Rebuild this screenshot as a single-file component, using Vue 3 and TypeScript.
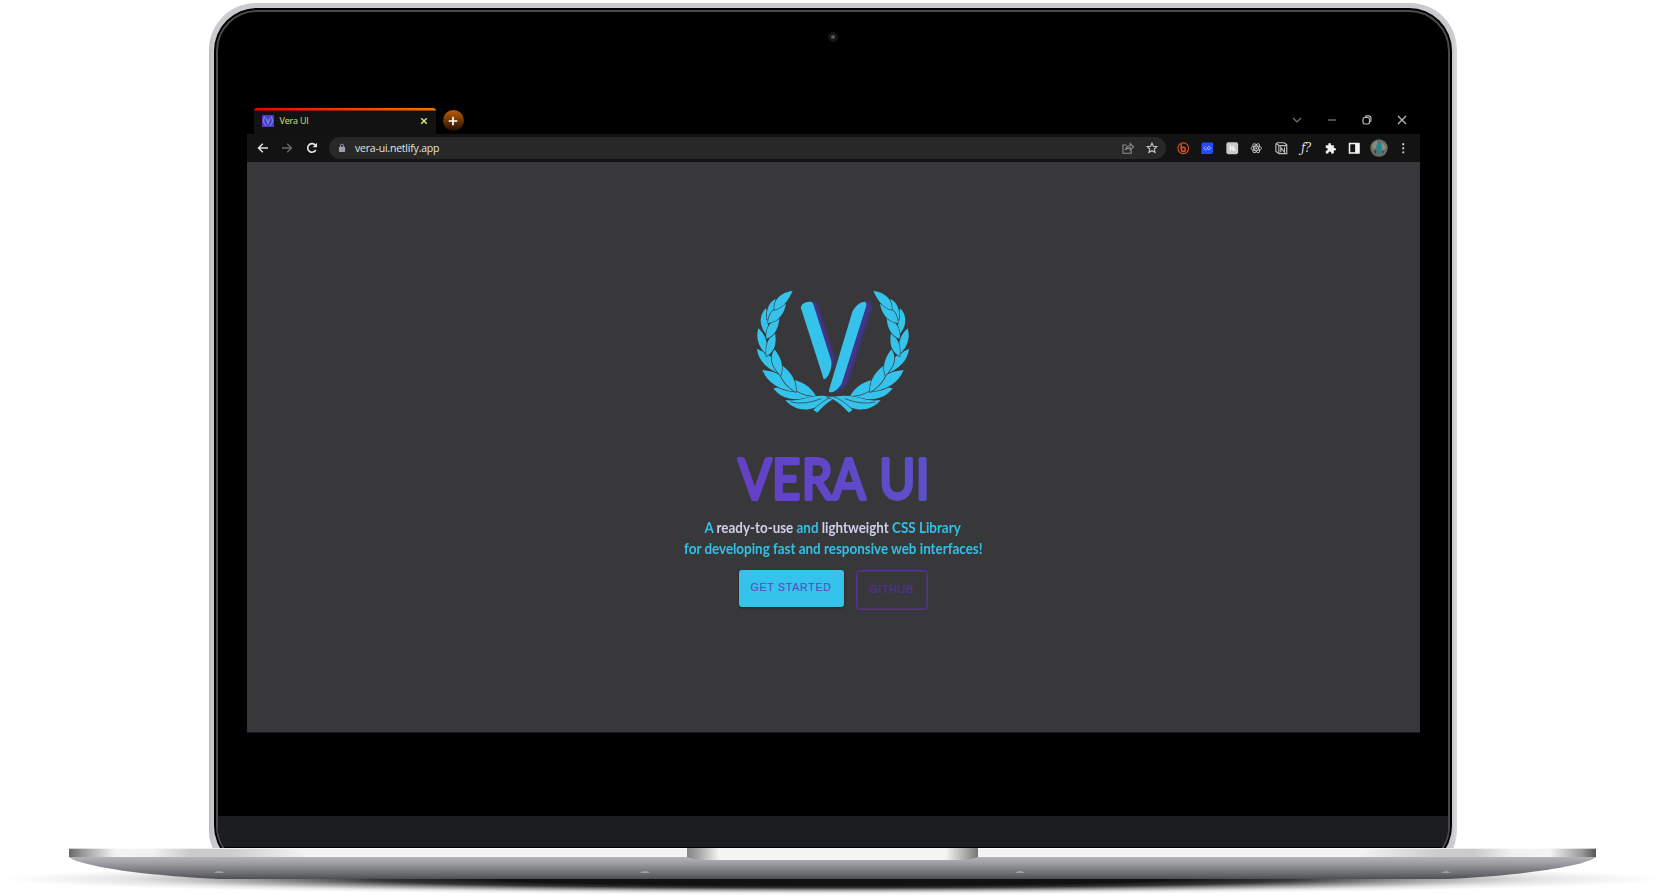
<script setup lang="ts">
const leaves: string[] = [
  'M64 310 C88 344 130 350 182 334 C146 308 108 300 64 310Z',
  'M116 283 C113 309 141 331 192 334 C175 303 148 288 116 283Z',
  'M31 255 C46 293 82 315 128 320 C108 278 74 258 31 255Z',
  'M83 237 C77 268 94 298 132 322 C134 282 112 254 83 237Z',
  'M15 191 C18 224 43 251 82 266 C78 226 52 208 15 191Z',
  'M67 193 C52 216 58 244 86 272 C97 241 84 213 67 193Z',
  'M19 130 C11 158 18 185 43 208 C50 172 40 149 19 130Z',
  'M69 145 C46 159 40 184 43 214 C71 199 74 170 69 145Z',
  'M41 70 C22 91 20 118 41 146 C52 124 52 92 41 70Z',
  'M82 97 C56 106 39 130 43 161 C70 154 81 125 82 97Z',
  'M71 42 C52 50 41 73 45 105 C60 90 72 66 71 42Z',
  'M102 57 C72 62 48 82 48 115 C82 109 97 84 102 57Z',
  'M122 17 C86 22 63 44 67 75 C95 68 111 42 122 17Z',
]
const feet: number[] = [219, 645, 1020, 1446]
</script>

<template>
  <main class="scene">
    <div class="lid-clip">
      <div class="lid">
        <div class="bezel">
          <div class="display">
            <div class="camera"><i></i></div>
            <section class="browser">
              <header class="tabs">
                <div class="tab">
                  <svg class="favicon" viewBox="0 0 12 12"><rect width="12" height="12" fill="#6130c4" /><path d="M3 1.500C.8 4 .8 8.500 4.200 10.700M9 1.500c2.200 2.500 2.200 7-1.200 9.200M4.200 3 6 8.500 8 3" fill="none" stroke="#4f8de8" stroke-width="1.400" /></svg>
                  <span class="tab-title">Vera UI</span>
                  <svg class="close" viewBox="0 0 8 8"><path d="m1.200 1.200 5.600 5.600m0-5.600L1.200 6.800" stroke="#dbe373" stroke-width="1.500" /></svg>
                </div>
                <div class="plus"><svg viewBox="0 0 10 10"><path d="M5 .7v8.600M.7 5h8.600" stroke="#fff" stroke-width="1.700" /></svg></div>
                <div class="controls">
                  <svg viewBox="0 0 12 12"><path d="m2 4 4 4 4-4" stroke="#777" stroke-width="1.200" /></svg>
                  <svg viewBox="0 0 12 12"><path d="M2 6h8" stroke="#999" stroke-width="1.200" /></svg>
                  <svg viewBox="0 0 12 12"><rect x="2" y="3.500" width="6.500" height="6.500" rx="1.700" stroke="#bbb" stroke-width="1.200" /><path d="M4 2.500c.4-.4 1-.6 2-.6h1.500c1.600 0 2.500.9 2.500 2.500v1.500c0 1-.2 1.600-.8 2" stroke="#bbb" stroke-width="1.100" /></svg>
                  <svg viewBox="0 0 12 12"><path d="m2 2 8 8m0-8-8 8" stroke="#bbb" stroke-width="1.200" /></svg>
                </div>
              </header>
              <nav class="toolbar">
                <div class="navs">
                  <svg viewBox="0 0 12 12"><path d="M11 6H1.500m4.300-4.300L1.500 6l4.300 4.300" stroke="#e4e4e4" stroke-width="1.500" /></svg>
                  <svg viewBox="0 0 12 12"><path d="M1 6h9.500M6.200 1.700 10.500 6l-4.300 4.300" stroke="#686868" stroke-width="1.400" /></svg>
                  <svg viewBox="0 0 12 12"><path d="M9.800 8A4.300 4.300 0 1 1 9 2.800L10.500 4.200" stroke="#e4e4e4" stroke-width="1.600" /><path d="M11 .8v4.400H6.600z" fill="#e4e4e4" /></svg>
                </div>
                <div class="address">
                  <svg class="lock" viewBox="0 0 8 10"><rect x=".9" y="3.700" width="6.200" height="5.200" rx=".7" fill="#9aa0a6" /><path d="M2.500 4V2.700a1.500 1.500 0 0 1 3 0V4" fill="none" stroke="#9aa0a6" /></svg>
                  <span class="url">vera-ui.netlify.app</span>
                  <svg class="share" viewBox="0 0 12 12"><path d="M4.500 3H1v8.300h8.300V8.500M3.500 8c.3-3 2-4.200 4.700-4.200V1.500l3.300 3.300-3.300 3.300V5.900C6 5.900 4.500 6.500 3.500 8Z" stroke="#8e8e8e" stroke-width="1.100" /></svg>
                  <svg viewBox="0 0 12 12"><path d="m6 1.200 1.400 3.100 3.400.4-2.500 2.300.7 3.400-3-1.700-3 1.700.7-3.400-2.500-2.300 3.400-.4z" stroke="#c8c8c8" stroke-width="1.100" /></svg>
                </div>
                <div class="extensions">
                  <svg viewBox="0 0 14 14"><circle cx="7" cy="7" r="6" stroke="#dd5420" stroke-width="1.200" /><path d="M4.800 2.500v5.500c0 1.500 1 2.500 2.200 2.500s2.400-1 2.400-2.200S8.400 6 7.200 6 5 7 5 8" stroke="#dd5420" stroke-width="1.700" /></svg>
                  <svg viewBox="0 0 14 14"><path d="M3 .5h10.500V10c0 2.500-1 3.500-3.500 3.500H.5V3C.5 1.500 1.500.5 3 .5Z" fill="#254aff" /><path d="M5 5 3 7l2 2c2 0 2-4 4-4l2 2-2 2-2-2" stroke="#b9c6ff" /></svg>
                  <svg viewBox="0 0 14 14"><rect x=".4" y=".4" width="13.200" height="13.200" rx="2" fill="#c9c9c9" /><path d="M5 3v7M8 4v6M4 7h5l1 3" stroke="#f4f4f4" stroke-width="1.500" /></svg>
                  <svg viewBox="0 0 14 14"><g stroke="#c8c8c8" stroke-width="1"><ellipse cx="7" cy="7" rx="5.800" ry="2.400" /><ellipse cx="7" cy="7" rx="5.800" ry="2.400" transform="rotate(60 7 7)" /><ellipse cx="7" cy="7" rx="5.800" ry="2.400" transform="rotate(120 7 7)" /></g><circle cx="7" cy="7" r="1.200" fill="#c8c8c8" /></svg>
                  <svg viewBox="0 0 14 14"><path d="M2.500.8h7.700l3 2.300v10H4.500L1 10.500V2.200zM1.500 1.500 4.300 4v9M4 4h9M6.500 11.500V6l4.200 5.500V6" stroke="#bbb" stroke-width="1.300" /></svg>
                  <span class="fx">ƒ?</span>
                  <svg viewBox="0 0 14 14"><path d="M2 3.500h3C4.500 1.800 5.200 1 6.300 1s1.800.8 1.300 2.500H11v3.200c1.600-.3 2.400.4 2.400 1.500S12.600 9.800 11 9.500V13H8c.3-1.600-.4-2.400-1.500-2.400S4.700 11.400 5 13H2V9.700c1.400.2 2.100-.5 2.100-1.500S3.400 6.600 2 6.800z" fill="#f0f0f0" /></svg>
                  <svg viewBox="0 0 14 14"><rect x="1.700" y="1.700" width="10.600" height="10.600" stroke="#f4f4f4" stroke-width="1.700" /><path d="M8 1.700h4.500v10.600H8z" fill="#f4f4f4" /></svg>
                  <svg class="avatar" viewBox="0 0 18 18"><circle cx="9" cy="9" r="8.700" fill="#6f6b66" /><path d="M2 7c2-4 4-5 5-5l1 4-4 5zM12 3l4 5-3 5-2-5z" fill="#8b8a83" /><path d="m7 5 2-2 2 2 1 4-1 1v5H9.500v-4h-1v5H7v-6l-1-1z" fill="#1b8b90" /><path d="M4 13l2-3v5zM12 11l2 1-1 3z" fill="#244b4b" /></svg>
                  <svg viewBox="0 0 14 14"><path d="M7 1.300v2.200M7 5.900v2.200m0 2.400v2.200" stroke="#ddd" stroke-width="2" /></svg>
                </div>
              </nav>
              <article class="page">
                <svg class="logo" viewBox="15 15 456 369">
                  <defs>
                    <filter id="glow" x="-20%" y="-20%" width="140%" height="140%"><feGaussianBlur stdDeviation="4" /></filter>
                    <g id="branch">
                      <g stroke="#38383a" stroke-width="3.500" stroke-linejoin="round" paint-order="stroke">
                        <path v-for="d in leaves" :key="d" :d="d" />
                      </g>
                      <path d="M100 345 C145 352 170 329 219 333 L243 335 C224 348 208 361 188 368 C158 380 122 372 100 345Z" stroke="#38383a" stroke-width="2" paint-order="stroke" />
                      <path d="M116 351 Q156 361 208 341" fill="none" stroke="#38383a" stroke-width="2.200" />
                      <path d="M196 384 L183 375 C204 355 222 341 245 334 L262 336 C232 346 214 364 196 384Z" stroke="#38383a" stroke-width="2" />
                    </g>
                  </defs>
                  <g fill="#35c3eb">
                    <use href="#branch" />
                    <use href="#branch" transform="translate(486 0) scale(-1 1)" />
                  </g>
                  <g fill="#42349b" opacity=".85" filter="url(#glow)">
                    <path d="M161 58 C170 50 192 47 197 59 L249 222 C250 238 237 260 224 249Z" />
                    <path d="M322 66 C331 51 348 45 358 54 L359 68 L288 289 C278 309 259 323 245 321Z" />
                  </g>
                  <g fill="#35c3eb">
                    <path d="M147 70 C144 55 174 44 183 55 L238 228 C241 248 228 284 215 282Z" />
                    <path d="M301 80 C309 64 324 50 338 50 Q345 51 342 65 L270 293 C260 312 245 323 234 322 Q229 321 232 311Z" />
                  </g>
                </svg>
                <h1 class="title">
                  <svg viewBox="0 0 194 54"><defs><linearGradient id="violet"><stop stop-color="#6440c6" /><stop offset="1" stop-color="#5c50ca" /></linearGradient></defs><text transform="scale(.86 1)" y="47" x="2.500 42 76.500 112 150 166.500 209">VERA UI</text></svg>
                </h1>
                <p class="tagline"><span>A <b>ready-to-use</b> and <b>lightweight</b> CSS Library</span><span>for developing fast and responsive web interfaces!</span></p>
                <div class="actions"><button class="primary">GET STARTED</button><button class="secondary">GITHUB</button></div>
              </article>
            </section>
            <div class="chin"></div>
          </div>
        </div>
      </div>
    </div>
    <svg class="base" viewBox="0 0 1666 47">
      <defs>
        <radialGradient id="shadow"><stop offset=".4" stop-color="#111" /><stop offset=".55" stop-color="#1a1a1a" stop-opacity=".88" /><stop offset=".7" stop-color="#333" stop-opacity=".48" /><stop offset=".85" stop-color="#555" stop-opacity=".15" /><stop offset="1" stop-color="#777" stop-opacity="0" /></radialGradient>
        <linearGradient id="metal" x2="0" y2="1"><stop stop-color="#b4b4b8" /><stop offset=".25" stop-color="#a0a1a5" /><stop offset=".7" stop-color="#727377" /><stop offset="1" stop-color="#4e4f52" /></linearGradient>
        <linearGradient id="edge"><stop stop-color="#686868" /><stop offset=".009" stop-color="#999" /><stop offset=".03" stop-color="#f3f3f3" /><stop offset=".055" stop-color="#f1f1f1" /><stop offset=".08" stop-color="#c9cac9" /><stop offset=".105" stop-color="#cdcdcd" /><stop offset=".155" stop-color="#f3f3f3" /><stop offset=".845" stop-color="#f3f3f3" /><stop offset=".895" stop-color="#cdcdcd" /><stop offset=".92" stop-color="#c9cac9" /><stop offset=".945" stop-color="#f1f1f1" /><stop offset=".97" stop-color="#f3f3f3" /><stop offset=".991" stop-color="#999" /><stop offset="1" stop-color="#555" /></linearGradient>
        <linearGradient id="notch"><stop stop-color="#858585" /><stop offset=".04" stop-color="#a5a5a5" /><stop offset=".11" stop-color="#f4f4f4" /><stop offset=".89" stop-color="#f4f4f4" /><stop offset=".96" stop-color="#a5a5a5" /><stop offset="1" stop-color="#777" /></linearGradient>
      </defs>
      <ellipse cx="833" cy="31" rx="833" ry="16" fill="url(#shadow)" />
      <path d="M69 9H1596C1592 14 1550 26 1446 31H219C115 26 73 14 69 9Z" fill="url(#metal)" />
      <path d="M69 0H1596V9H69Z" fill="url(#edge)" /><path d="M69 .5H1596" stroke="#fff" opacity=".65" />
      <path d="M687 0H978V9Q971 12 959 12H706Q694 12 687 9Z" fill="url(#notch)" />
      <path v-for="x in feet" :key="x" :d="`M${x - 5} 25 Q${x} 21 ${x + 5} 25Z`" fill="#a0a1a5" />
    </svg>
  </main>
</template>

<style>
html, body { margin: 0; background: #fff; }
</style>

<style scoped>
* { box-sizing: border-box; }
svg { display: block; fill: none; overflow: visible; }
.scene { width: 1666px; height: 895px; overflow: hidden; padding-top: 3px; background: #fff; font-family: "Open Sans", "Noto Sans", sans-serif; }
.base { width: 1666px; height: 47px; }
.lid-clip { width: 1248px; height: 845px; margin-left: 209px; overflow: hidden; }
.lid { height: 874px; padding: 5px 5px 8px; border-radius: 47px; background: linear-gradient(90deg, #b9babf, #cbcacf 4px, #cbcacf 1244px, #dedee0); }
.bezel { height: 861px; padding: 2px; border-radius: 43px; background: #000; }
.display { height: 857px; border: 2px solid #4a4a4a; border-radius: 41px; background: #000; overflow: hidden; }
.camera { height: 96px; padding-top: 20px; display: flex; justify-content: center; }
.camera i { width: 10px; height: 10px; border: 3.500px solid #151515; border-radius: 50%; background: #555; }
.browser { width: 1173px; margin-left: 28.500px; height: 625px; display: flex; flex-direction: column; }
.tabs { height: 26px; display: flex; padding-left: 7px; }
.tab { width: 182px; height: 26px; display: flex; align-items: center; padding: 0 8px 1px 8px; background: linear-gradient(90deg, #f00000, #ee7900) 0 0 / 100% 2.500px no-repeat #121212; border-radius: 3px 3px 0 0; }
.favicon { width: 12px; height: 12px; }
.tab-title { margin-left: 6px; flex: 1; font-size: 9px; font-weight: 500; letter-spacing: -.2px; color: #dbe373; line-height: 12px; }
.close { width: 8px; height: 8px; }
.plus { width: 21px; height: 21px; margin: 2px 0 0 7px; border-radius: 50%; background: linear-gradient(#bd5e05, #1e0e00); display: grid; place-items: center; }
.plus svg { width: 10px; }
.controls { display: flex; gap: 23px; margin: 6px 12px 0 auto; }
.controls svg { width: 12px; height: 12px; }
.toolbar { height: 28px; background: #131313; display: flex; align-items: center; padding: 1px 0 0 10px; border-bottom: 1px solid #101010; flex: none; }
.navs { display: flex; gap: 12.500px; width: 72.500px; }
.navs svg { width: 12px; height: 12px; }
.address { width: 837px; height: 22px; border-radius: 11px; background: #282828; display: flex; align-items: center; padding: 0 8px 0 9px; flex: none; }
.lock { width: 8px; height: 10px; }
.url { margin-left: 9px; font-size: 10.500px; font-weight: 500; letter-spacing: -.2px; color: #e3e3e3; line-height: 15px; }
.address .share { margin-left: auto; margin-right: 12.500px; }
.address > svg:not(.lock) { width: 12px; height: 12px; }
.extensions { display: flex; align-items: center; margin-left: 4.500px; }
.extensions > * { width: 12.500px; height: 12.500px; margin: 0 6px; flex: none; }
.extensions .avatar { width: 18px; height: 18px; margin: 0 3.250px; }
.extensions .fx { font: italic 12px/12px "DejaVu Serif", serif; color: #ddd; letter-spacing: -.8px; white-space: nowrap; padding-left: 2px; }
.page { height: 571px; background: #38383a; border-bottom: 1.500px solid #111c28; display: flex; flex-direction: column; align-items: center; padding-top: 128px; }
.logo { width: 152px; height: 123px; flex: none; }
.title { width: 194px; height: 54px; margin: 39px 0 0; }
.title svg { width: 194px; height: 54px; }
.title text { font-family: Lato, sans-serif; font-size: 57px; font-weight: 400; fill: url(#violet); stroke: url(#violet); stroke-width: 3.800; stroke-linejoin: round; }
.tagline { margin: 10.500px 0 0; display: flex; flex-direction: column; align-items: center; color: #35bfe6; font: 700 14.500px/21px Lato, sans-serif; white-space: nowrap; }
.tagline b { color: #cfcfec; font-weight: 700; }
.tagline span { transform: scaleX(.925); }
.actions { display: flex; align-items: flex-start; gap: 12px; margin-top: 11px; }
button { font: 10.500px/13px "Liberation Sans", Arial, sans-serif; letter-spacing: .8px; padding: 0; white-space: nowrap; -webkit-text-stroke: .2px; }
.primary { width: 105px; height: 37px; padding-bottom: 2px; border: 0; border-radius: 3px; background: #35c3eb; color: #5551c8; box-shadow: 0 1px 2px #111a; }
.secondary { width: 72px; height: 40px; padding-bottom: 1px; border: 1.500px solid #57309a; box-shadow: inset 0 0 0 .5px #57309a; border-radius: 4px; background: transparent; color: #57309a; }
.chin { height: 32px; margin-top: 83px; background: #1c1d1e; border-bottom: 1px solid #000; }
</style>
